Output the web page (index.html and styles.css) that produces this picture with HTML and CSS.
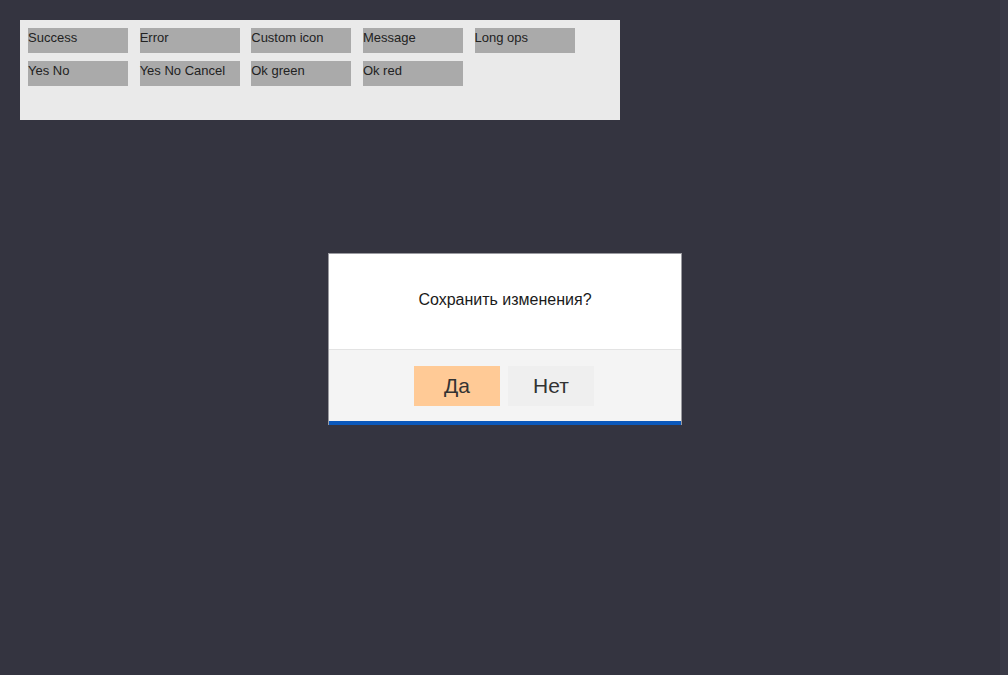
FILE: index.html
```html
<!DOCTYPE html>
<html lang="ru">
<head>
<meta charset="utf-8">
<title>Dialogs</title>
<link rel="stylesheet" href="styles.css">
</head>
<body>
<div class="page">
  <div class="panel">
    <button class="btn">Success</button> <button class="btn">Error</button> <button class="btn">Custom icon</button> <button class="btn">Message</button> <button class="btn">Long ops</button>
    <br>
    <button class="btn">Yes No</button> <button class="btn">Yes No Cancel</button> <button class="btn">Ok green</button> <button class="btn">Ok red</button>
  </div>
</div>
<div class="overlay">
  <div class="dialog">
    <div class="dialog-body">Сохранить изменения?</div>
    <div class="dialog-footer">
      <button class="dbtn dbtn-yes">Да</button>
      <button class="dbtn dbtn-no">Нет</button>
    </div>
  </div>
</div>
</body>
</html>
```
FILE: styles.css
```css
html {
  background: #3a3a47;
  height: 100%;
}
body {
  margin: 0;
  height: 100%;
  font-family: "Liberation Sans", Arial, sans-serif;
}
.page {
  width: 1000px;
  height: 100%;
  background: #343440;
  padding: 20px;
  box-sizing: border-box;
}
.panel {
  width: 600px;
  height: 100px;
  box-sizing: border-box;
  padding: 8px;
  background: #eaeaea;
  font-size: 13px;
  line-height: 16px;
}
.btn {
  display: inline-block;
  width: 100px;
  height: 25px;
  margin: 0 8px 8px 0;
  padding: 0 0 6px 0;
  border: 0;
  background: #aaaaaa;
  color: #222;
  font: inherit;
  text-align: left;
  vertical-align: top;
  box-sizing: border-box;
}
.overlay {
  position: fixed;
  inset: 0;
  display: flex;
  align-items: center;
  justify-content: center;
}
.dialog {
  width: 352px;
  border: 1px solid #9a9aa0;
  border-bottom: 0;
  background: #fff;
  margin-left: 2px;
  margin-top: 3px;
}
.dialog-body {
  height: 95px;
  display: flex;
  align-items: center;
  justify-content: center;
  font-size: 16px;
  color: #1a1a1a;
  padding-bottom: 3px;
  box-sizing: border-box;
}
.dialog-footer {
  height: 71px;
  border-top: 1px solid #e3e3e3;
  border-bottom: 4px solid #0b58bb;
  background: #f4f4f4;
  display: flex;
  align-items: center;
  justify-content: center;
  gap: 8px;
  padding-right: 2px;
}
.dbtn {
  width: 86px;
  height: 40px;
  border: 0;
  font-family: inherit;
  font-size: 21px;
  color: #333;
  padding: 0;
}
.dbtn-yes {
  background: #ffca96;
}
.dbtn-no {
  background: #efefef;
}
```
